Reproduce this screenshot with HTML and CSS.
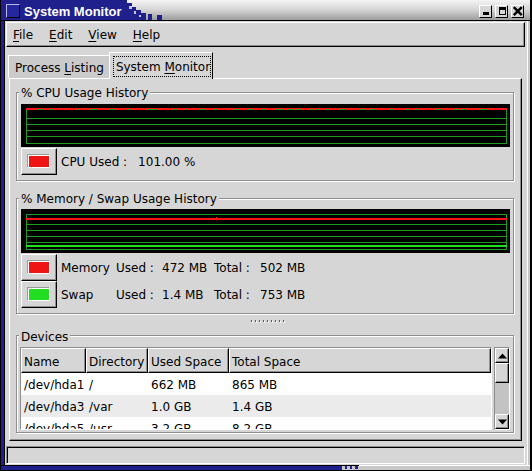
FILE: index.html
```html
<!DOCTYPE html>
<html>
<head>
<meta charset="utf-8">
<title>System Monitor</title>
<link rel="stylesheet" href="styles.css">
</head>
<body>
<div class="win">
  <div class="titlebar">
    <div class="tb-blue">
      <span class="tb-icon"></span>
      <span class="tb-title">System Monitor</span>
    </div>
    <svg class="tb-blocks" width="40" height="20" viewBox="0 0 40 20">
      <g fill="#20208c">
        <rect x="0" y="3" width="5" height="17"/>
        <rect x="5" y="7" width="4" height="13"/>
        <rect x="9" y="10" width="5" height="10"/>
        <rect x="14" y="13" width="5" height="7"/>
        <rect x="21" y="14" width="4" height="6"/>
        <rect x="30" y="15" width="5" height="5"/>
      </g>
      <g fill="#c4c4d4">
        <rect x="2" y="6" width="3" height="3"/>
        <rect x="7" y="11" width="2" height="3"/>
        <rect x="12" y="15" width="2" height="2"/>
      </g>
    </svg>
    <div class="tb-fill"></div>
    <div class="tb-btns">
      <span class="wbtn"><svg width="11" height="11" viewBox="0 0 11 11"><rect x="3" y="6" width="6" height="3"/></svg></span>
      <span class="wbtn"><svg width="11" height="11" viewBox="0 0 11 11"><path d="M3 1h7v8H3z M4 4h5v4H4z" fill-rule="evenodd"/></svg></span>
      <span class="wbtn"><svg width="11" height="11" viewBox="0 0 11 11"><path d="M1.8 1.2L9.8 9.2M9.8 1.2L1.8 9.2" stroke="#000" stroke-width="2.4" fill="none"/></svg></span>
    </div>
  </div>

  <div class="lframe"></div>

  <div class="client">
    <div class="menubar">
      <span class="mi"><u>F</u>ile</span>
      <span class="mi"><u>E</u>dit</span>
      <span class="mi"><u>V</u>iew</span>
      <span class="mi"><u>H</u>elp</span>
    </div>

    <div class="tabs">
      <div class="tab">Process <u>L</u>isting</div>
      <div class="tab active"><span class="focus">System <u>M</u>onitor</span></div>
    </div>

    <div class="panel">
      <div class="frame">
        <div class="ftitle">% CPU Usage History</div>
        <svg class="graph" width="489" height="43" viewBox="0 0 489 43">
          <rect width="489" height="43" fill="#000"/>
          <g fill="none" stroke="#1f9b1f" stroke-width="1">
            <rect x="5.5" y="5.5" width="480" height="34"/>
            <path d="M5 14.5H486M5 20.5H486M5 26.5H486M5 32.5H486"/>
          </g>
          <rect x="5" y="4" width="481" height="2" fill="#ff1414"/>
          <g fill="#1f9b1f">
            <rect x="17" y="5" width="5" height="1"/><rect x="29" y="5" width="3" height="1"/>
            <rect x="56" y="5" width="3" height="1"/><rect x="69" y="5" width="7" height="1"/>
            <rect x="89" y="5" width="5" height="1"/><rect x="106" y="5" width="5" height="1"/>
            <rect x="126" y="5" width="10" height="1"/><rect x="152" y="5" width="5" height="1"/>
            <rect x="164" y="5" width="3" height="1"/><rect x="179" y="5" width="5" height="1"/>
            <rect x="192" y="5" width="5" height="1"/><rect x="212" y="5" width="7" height="1"/>
            <rect x="227" y="5" width="5" height="1"/><rect x="241" y="5" width="4" height="1"/>
            <rect x="254" y="5" width="9" height="1"/><rect x="266" y="5" width="7" height="1"/>
            <rect x="275" y="5" width="5" height="1"/><rect x="288" y="5" width="5" height="1"/>
            <rect x="295" y="5" width="4" height="1"/><rect x="304" y="5" width="5" height="1"/>
            <rect x="319" y="5" width="5" height="1"/><rect x="338" y="5" width="6" height="1"/>
            <rect x="348" y="5" width="6" height="1"/><rect x="368" y="5" width="5" height="1"/>
            <rect x="384" y="5" width="5" height="1"/><rect x="394" y="5" width="4" height="1"/>
            <rect x="414" y="5" width="6" height="1"/><rect x="433" y="5" width="5" height="1"/>
            <rect x="440" y="5" width="4" height="1"/><rect x="459" y="5" width="7" height="1"/>
          </g>
        </svg>
        <div class="srow">
          <span class="sbtn"><span class="swatch red"></span></span>
          <span class="slabel">CPU Used :</span><span class="sval">101.00 %</span>
        </div>
      </div>

      <div class="frame mem">
        <div class="ftitle">% Memory / Swap Usage History</div>
        <svg class="graph g2" width="489" height="44" viewBox="0 0 489 44">
          <rect width="489" height="44" fill="#000"/>
          <g fill="none" stroke="#1f9b1f" stroke-width="1">
            <rect x="5.5" y="5.5" width="480" height="35"/>
            <path d="M5 15.5H486M5 21.5H486M5 27.5H486M5 33.5H486"/>
          </g>
          <rect x="5" y="9" width="481" height="2" fill="#ff1414"/>
          <rect x="195" y="8" width="1" height="1" fill="#ff1414"/>
          <rect x="5" y="36" width="481" height="2" fill="#22dd22"/>
        </svg>
        <div class="mrow">
          <span class="sbtn"><span class="swatch red"></span></span>
          <span class="mc first">Memory</span>
          <span class="mc">Used :</span>
          <span class="mc">472 MB</span>
          <span class="mc">Total :</span>
          <span class="mc">502 MB</span>
        </div>
        <div class="mrow">
          <span class="sbtn"><span class="swatch green"></span></span>
          <span class="mc first">Swap</span>
          <span class="mc">Used :</span>
          <span class="mc">1.4 MB</span>
          <span class="mc">Total :</span>
          <span class="mc">753 MB</span>
        </div>
      </div>

      <div class="grip">
        <i></i><i></i><i></i><i></i><i></i><i></i><i></i><i></i><i></i>
      </div>

      <div class="frame dev">
        <div class="ftitle">Devices</div>
        <div class="devbody">
          <div class="list">
            <div class="thead">
              <span class="th">Name</span>
              <span class="th">Directory</span>
              <span class="th">Used Space</span>
              <span class="th">Total Space</span>
            </div>
            <div class="tr">
              <span class="td">/dev/hda1</span><span class="td">/</span><span class="td">662 MB</span><span class="td">865 MB</span>
            </div>
            <div class="tr alt">
              <span class="td">/dev/hda3</span><span class="td">/var</span><span class="td">1.0 GB</span><span class="td">1.4 GB</span>
            </div>
            <div class="tr">
              <span class="td">/dev/hda5</span><span class="td">/usr</span><span class="td">3.2 GB</span><span class="td">8.2 GB</span>
            </div>
          </div>
          <div class="vscroll">
            <span class="sb"><svg width="9" height="6" viewBox="0 0 9 6"><path d="M0 5.5L4.5 0.5L9 5.5z"/></svg></span>
            <span class="thumb"></span>
            <span class="trough"></span>
            <span class="sb"><svg width="9" height="6" viewBox="0 0 9 6"><path d="M0 0.5L4.5 5.5L9 0.5z"/></svg></span>
          </div>
        </div>
      </div>
    </div>

    <div class="status"></div>
  </div>

  <div class="rframe"></div>

  <div class="bframe">
    <div class="bf-blue"></div>
    <svg class="bf-blocks" width="17" height="5" viewBox="0 0 17 5">
      <g fill="#20208c">
        <rect x="3" y="1" width="2" height="3"/>
        <rect x="8" y="1" width="2" height="3"/>
        <rect x="13" y="1" width="3" height="3"/>
      </g>
      <g fill="#000">
        <rect x="0" y="0" width="17" height="1" fill="#000"/>
      </g>
    </svg>
    <div class="bf-rest"></div>
  </div>
</div>
</body>
</html>
```

FILE: styles.css
```css
* { box-sizing: border-box; }

html, body {
  margin: 0;
  padding: 0;
}

body {
  width: 532px;
  height: 471px;
  overflow: hidden;
  background: #d6d6d6;
  font-family: "DejaVu Sans", "Bitstream Vera Sans", sans-serif;
  font-size: 12px;
  line-height: 14px;
  color: #000;
}

u { text-decoration: underline; text-underline-offset: 2px; }

.win {
  display: grid;
  grid-template-columns: 5px 522px 5px;
  grid-template-rows: 21px 444px 6px;
  width: 532px;
  height: 471px;
}

/* ---------- title bar ---------- */
.titlebar {
  grid-column: 1 / 4;
  grid-row: 1;
  display: flex;
  background: linear-gradient(#f4f4f4, #d4d4d4 50%, #9c9c9c);
  border-bottom: 1px solid #000;
  border-right: 2px solid #000;
}

.tb-blue {
  width: 127px;
  flex: none;
  display: flex;
  align-items: flex-start;
  background: #20208c;
  border-left: 1px solid #000;
  padding-left: 5px;
}

.tb-icon {
  width: 14px;
  height: 14px;
  margin-top: 4px;
  background: #2626a0;
  border: 1px solid;
  border-color: #b8b8e0 #000 #000 #b8b8e0;
}

.tb-title {
  margin: 5px 0 0 4px;
  font: bold 13px/14px "Liberation Sans", Arial, sans-serif;
  color: #fff;
  white-space: nowrap;
}

.tb-blocks { display: block; flex: none; }
.tb-fill { flex: 1; }

.tb-btns {
  display: flex;
  gap: 3px;
  padding: 5px 6px 0 0;
}

.wbtn {
  width: 13px;
  height: 13px;
  background: #d6d6d6;
  border: 1px solid;
  border-color: #fff #000 #000 #fff;
}
.wbtn svg { display: block; }

/* ---------- window frame ---------- */
.lframe {
  grid-column: 1;
  grid-row: 2;
  background: #20208c;
  border-left: 1px solid #000;
  border-right: 1px solid #000;
}

.rframe {
  grid-column: 3;
  grid-row: 2;
  background: #c8c8c8;
  border-left: 1px solid #fff;
  border-right: 2px solid #000;
}

.bframe {
  grid-column: 1 / 4;
  grid-row: 3;
  display: flex;
  background: #c8c8c8;
  border-bottom: 1px solid #000;
  border-right: 2px solid #000;
}
.bf-blue {
  width: 342px;
  flex: none;
  background: #20208c;
  border-top: 1px solid #000;
  border-left: 1px solid #000;
}
.bf-blocks { display: block; flex: none; }
.bf-rest {
  flex: 1;
  border-top: 1px solid #fff;
}

/* ---------- client ---------- */
.client {
  grid-column: 2;
  grid-row: 2;
  display: flex;
  flex-direction: column;
  padding-top: 1px;
  background: #d6d6d6;
}

.menubar {
  height: 25px;
  margin: 0 2px 0 1px;
  display: flex;
  align-items: flex-start;
  gap: 16px;
  padding: 5px 0 0 6px;
  border: 1px solid;
  border-color: #fff #000 #000 #fff;
  box-shadow: inset -1px -1px 0 #8e8e8e;
}

/* ---------- notebook ---------- */
.tabs {
  height: 31px;
  display: flex;
  align-items: flex-end;
  padding-left: 3px;
}

.tab {
  height: 23px;
  padding: 5px 5px 3px 6px;
  background: #cbcbcb;
  border-top: 1px solid #fff;
  border-left: 1px solid #fff;
  white-space: nowrap;
}

.tab.active {
  position: relative;
  z-index: 1;
  height: 27px;
  margin-bottom: -1px;
  padding: 3px 1px 2px 3px;
  background: #d6d6d6;
  border-right: 1px solid #000;
}

.focus {
  display: block;
  border: 1px dotted #000;
  padding: 3px 0 2px 2px;
}

.panel {
  height: 363px;
  margin: 0 5px 0 4px;
  padding: 13px 7px 0 6px;
  border: 1px solid;
  border-color: #fff #000 #000 #fff;
  box-shadow: inset -1px -1px 0 #8e8e8e;
}

/* ---------- frames ---------- */
.frame {
  border: 1px solid #8e8e8e;
  box-shadow: inset 1px 1px 0 #fff, 1px 1px 0 #fff;
  padding: 0 3px 5px 4px;
}
.frame.mem { margin-top: 17px; }
.frame.dev { padding: 0 3px 2px 3px; }

.ftitle {
  width: fit-content;
  margin: -7px 0 0 -2px;
  padding: 0 2px;
  background: #d6d6d6;
  white-space: nowrap;
}
.frame.dev .ftitle { margin-top: -6px; margin-left: -1px; }

.graph { display: block; margin-top: 4px; }
.graph.g2 { margin-top: 3px; }

.srow {
  display: flex;
  align-items: center;
  height: 27px;
  margin-top: 1px;
}

.sbtn {
  width: 36px;
  height: 27px;
  flex: none;
  display: flex;
  align-items: center;
  justify-content: center;
  background: #d6d6d6;
  border: 1px solid;
  border-color: #fff #000 #000 #fff;
  box-shadow: inset -1px -1px 0 #8e8e8e;
}

.swatch {
  width: 22px;
  height: 13px;
  border: 1px solid #fff;
  box-shadow: -1px -1px 0 #9a9a9a;
}
.swatch.red { background: #ef1515; }
.swatch.green { background: #22dd22; }

.slabel { margin-left: 4px; white-space: nowrap; }
.sval { margin-left: 11px; white-space: nowrap; }

.mrow {
  display: grid;
  grid-template-columns: 36px 59px 46px 52px 46px auto;
  align-items: center;
  height: 27px;
  white-space: nowrap;
}
.graph + .mrow { margin-top: 1px; }
.mc.first { padding-left: 4px; }

/* ---------- pane grip ---------- */
.grip {
  height: 21px;
  display: flex;
  align-items: flex-start;
  gap: 3px;
  padding: 6px 0 0 235px;
}
.grip i {
  display: block;
  width: 1px;
  height: 2px;
  background: #5a5a5a;
  box-shadow: 1px 1px 0 #fff;
}

/* ---------- device list ---------- */
.devbody {
  display: flex;
  gap: 2px;
  margin-top: 3px;
}

.list {
  width: 472px;
  height: 83px;
  overflow: hidden;
  background: #fff;
  border: 1px solid;
  border-color: #8e8e8e #fff #fff #8e8e8e;
}

.thead, .tr {
  display: grid;
  grid-template-columns: 65px 62px 81px 262px;
}

.th {
  height: 25px;
  padding: 6px 0 0 2px;
  background: #d6d6d6;
  border: 1px solid;
  border-color: #fff #000 #000 #fff;
  box-shadow: inset -1px -1px 0 #8e8e8e;
  white-space: nowrap;
}

.tr {
  height: 22px;
  padding-top: 5px;
  background: #fff;
}
.tr.alt { background: #ebebeb; }
.td { padding-left: 3px; white-space: nowrap; }

.vscroll {
  width: 16px;
  height: 83px;
  display: flex;
  flex-direction: column;
  background: #c3c3c3;
  border: 1px solid;
  border-color: #8e8e8e #fff #fff #8e8e8e;
}

.sb, .thumb {
  display: flex;
  align-items: center;
  justify-content: center;
  background: #d6d6d6;
  border: 1px solid;
  border-color: #fff #000 #000 #fff;
  box-shadow: inset -1px -1px 0 #8e8e8e;
}
.sb { height: 15px; }
.sb svg { display: block; }
.thumb { height: 20px; }
.trough { flex: 1; }

/* ---------- status bar ---------- */
.status {
  height: 18px;
  margin: 5px 2px 0 1px;
  border: 1px solid;
  border-color: #8e8e8e #fff #fff #8e8e8e;
  box-shadow: inset 1px 1px 0 #000;
}
```
